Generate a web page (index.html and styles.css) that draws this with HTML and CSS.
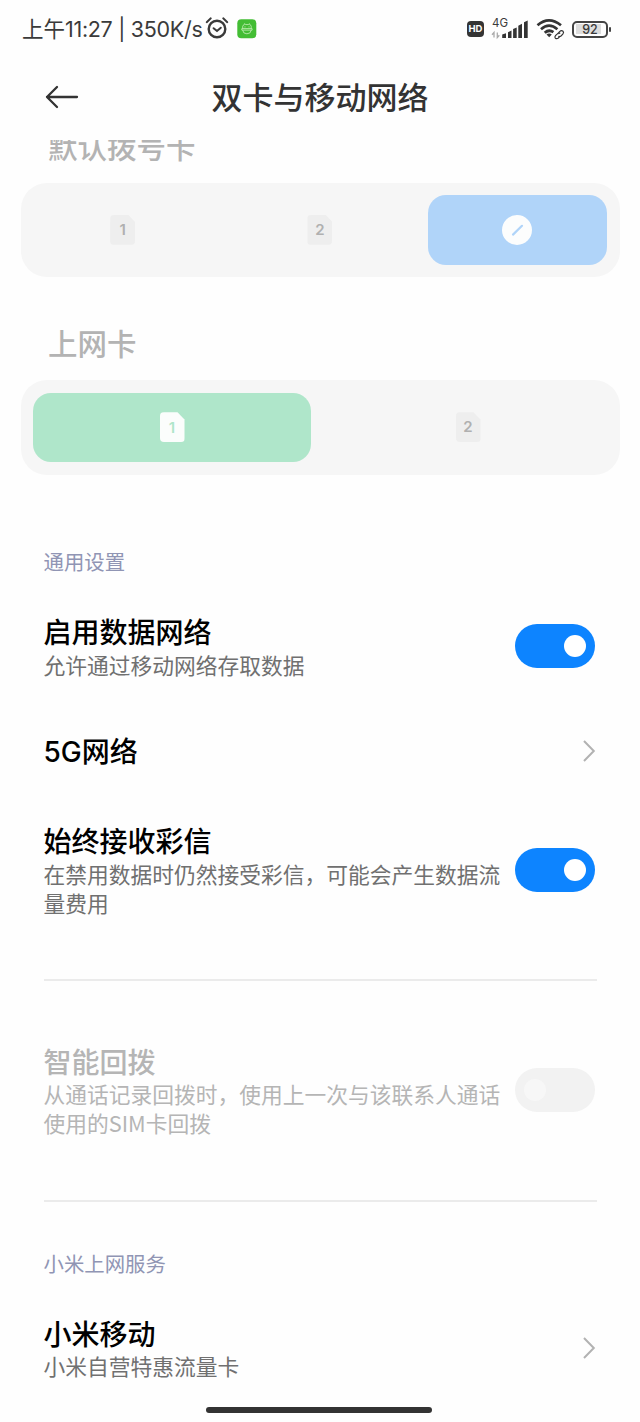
FILE: index.html
```html
<!DOCTYPE html>
<html lang="zh-CN">
<head>
<meta charset="utf-8">
<title>双卡与移动网络</title>
<link rel="stylesheet" href="styles.css">
</head>
<body>
<div class="screen">
  <header class="status">
    <span class="status-time">上午<span class="latin">11:27 | 350K/s</span></span>
    <svg class="alarm" width="24" height="24" viewBox="0 0 24 24" fill="none" stroke="#3a3a3a" stroke-linecap="round"><circle cx="12" cy="13" r="8.3" stroke-width="2.4"/><path d="M1.7 6.2 5.8 2.3M22.3 6.2 18.2 2.3" stroke-width="1.9"/><path d="M8.6 12.2 12 15l3.8-3.3" stroke-width="2"/></svg>
    <svg class="app" width="20" height="20" viewBox="0 0 20 20"><rect x=".3" y=".3" width="19" height="19" rx="4" fill="#43bd34"/><g fill="none" stroke="#c9f0bd" stroke-width=".8"><path d="M5.7 9.5V7.2Q6 6 7.2 5.8L7.5 4.7 8.8 5.6h2.4l1.3-.9.3 1.1Q14 6 14.2 7.2v2.3M4.8 9.6h10.3v1.5H4.8zM5.7 11.2q.3 3.6 4.2 3.6t4.3-3.6M8 7.4v1M12 7.4v1"/></g></svg>
    <span class="spacer"></span>
    <span class="hd">HD</span>
    <span class="signal">
      <span class="signal-type">4G</span>
      <svg width="38" height="20" viewBox="0 0 38 20"><g fill="#343434"><path d="M11.2 14.6 15 13.2V18h-3.8zM17 12.2l3.5-1.7V18H17zM22.1 9l3.6-1.6V18h-3.6zM27.3 5.7l3.7-2V18h-3.7zM33 2.3l3.7-1.8V18H33z"/></g><path d="M3 17.5v-5L1 14.8M6.3 12.5v5l2-2.3" fill="none" stroke="#aaa" stroke-width="1.3"/></svg>
    </span>
    <svg class="wifi" width="30" height="22" viewBox="0 0 30 22" fill="none"><g stroke="#343434" stroke-width="2.7"><path d="M1.5 7.3Q12.8-2.5 25 7.3M5 11.2Q13 4 21.4 11.2M8.7 14.8Q13 11 17.4 14.2"/></g><path d="M10.5 16.4Q13.2 14.7 15.8 16.4L13.2 19.2z" fill="#343434"/><g stroke="#343434" stroke-width="1.2"><path d="m21.6 16 2-2.4q1.8-1.6 3.4-.4 1.2 1.4-.2 3l-1.8 1.8q-1.3.9-2.7.2M24.3 15.4q-1.8-.9-3 .4l-1.8 1.8q-1.2 1.6-.1 2.6 1.4 1 3-.2l1.7-1.8"/></g></svg>
    <span class="battery"><span class="battery-level">92</span></span>
  </header>

  <nav class="titlebar">
    <svg class="back" width="34" height="24" viewBox="0 0 34 24" fill="none" stroke="#333" stroke-width="2.3" stroke-linecap="round" stroke-linejoin="round"><path d="M32 12H2M12 2 2 12l10 10"/></svg>
    <h1 class="title">双卡与移动网络</h1>
  </nav>

  <main class="content">
    <h2 class="card-title card-title-clipped">默认拨号卡</h2>
    <div class="picker">
      <div class="option"><span class="sim">1</span></div>
      <div class="option"><span class="sim">2</span></div>
      <div class="option option-blue"><svg width="30" height="30" viewBox="0 0 30 30"><circle cx="15" cy="15" r="15" fill="#fcfdfd"/><path d="m11 19.6 9-8.8" stroke="#b0d4f9" stroke-width="2.2" stroke-linecap="round"/></svg></div>
    </div>
    <h2 class="card-title">上网卡</h2>
    <div class="picker">
      <div class="option option-green"><span class="sim sim-active">1</span></div>
      <div class="option"><span class="sim">2</span></div>
    </div>

    <section class="group group-general">
      <h3 class="group-label">通用设置</h3>
      <div class="row">
        <div class="row-text"><div class="row-title">启用数据网络</div><div class="row-desc">允许通过移动网络存取数据</div></div>
        <span class="toggle"></span>
      </div>
      <div class="row">
        <div class="row-text"><div class="row-title"><span class="latin">5G</span>网络</div></div>
        <svg class="chevron" width="14" height="24" viewBox="0 0 14 24"><path d="M2 2 11.8 12 2 22"/></svg>
      </div>
      <div class="row">
        <div class="row-text"><div class="row-title">始终接收彩信</div><div class="row-desc">在禁用数据时仍然接受彩信，可能会产生数据流量费用</div></div>
        <span class="toggle"></span>
      </div>
    </section>
    <section class="group group-callback">
      <div class="row row-disabled">
        <div class="row-text"><div class="row-title">智能回拨</div><div class="row-desc">从通话记录回拨时，使用上一次与该联系人通话使用的SIM卡回拨</div></div>
        <span class="toggle toggle-off"></span>
      </div>
    </section>
    <section class="group group-service">
      <h3 class="group-label">小米上网服务</h3>
      <div class="row">
        <div class="row-text"><div class="row-title">小米移动</div><div class="row-desc">小米自营特惠流量卡</div></div>
        <svg class="chevron" width="14" height="24" viewBox="0 0 14 24"><path d="M2 2 11.8 12 2 22"/></svg>
      </div>
    </section>
  </main>
  <div class="home-bar"></div>
</div>
</body>
</html>
```

FILE: styles.css
```css
* { box-sizing: border-box; }
body { margin: 0; background: #fefefe; font-family: "Noto Sans CJK SC", sans-serif; }
h1, h2, h3 { margin: 0; }
svg { display: block; flex: none; }
.latin { font-family: Inter, sans-serif; line-height: 1; }
.screen { position: relative; width: 640px; height: 1422px; overflow: hidden; display: flex; flex-direction: column; }

.status { flex: none; height: 58px; padding: 0 28px 0 22px; display: flex; align-items: center; color: #3a3a3a; }
.status-time { width: 183px; margin-top: -2px; font-size: 21.5px; line-height: 30px; white-space: nowrap; }
.status-time .latin { letter-spacing: -.3px; }
.alarm { margin-bottom: 2px; }
.app { margin-left: 8px; }
.spacer { flex: 1; }
.hd { width: 17px; height: 16px; margin-bottom: 1px; border-radius: 4px; background: #343434; color: #fff; font: 700 9.5px/16px Inter, sans-serif; text-align: center; }
.signal { position: relative; width: 38px; margin-left: 7px; padding-top: 1px; }
.signal-type { position: absolute; left: 1px; top: -2px; font: 11.5px/12px Inter, sans-serif; }
.wifi { margin: 0 0 0 7px; }
.battery { position: relative; width: 36px; height: 17px; margin: 0 4px 0 6px; padding: 1.5px 2px; border: 2px solid #444; border-radius: 5px; }
.battery::after { content: ""; position: absolute; left: 35px; top: 4px; width: 2px; height: 5px; background: #444; border-radius: 1px; }
.battery-level { display: block; width: 28px; height: 10px; background: linear-gradient(90deg, #ddd 90%, transparent 90%); font: 500 12.5px/11px Inter, sans-serif; text-align: center; }

.titlebar { flex: none; height: 82px; padding: 0 45px 5px; display: grid; grid-template-columns: 1fr auto 1fr; align-items: center; }
.title { margin-top: -1px; font-size: 31px; font-weight: 500; line-height: 40px; color: #333; }

.content { flex: 1; overflow: hidden; padding: 0 20.5px; }
.card-title { height: 103px; padding: 44px 0 0 27.5px; font-size: 29.5px; font-weight: 500; line-height: 43px; color: #b3b3b3; }
.card-title-clipped { height: 42.5px; padding-top: 0; line-height: 10px; }
.picker { height: 94.5px; padding: 12.5px; display: flex; gap: 18px; background: #f6f6f6; border-radius: 26px; }
.option { flex: 1; display: flex; align-items: center; justify-content: center; border-radius: 18px; }
.option-blue { background: #b0d4f9; }
.option-green { background: #afe6ca; }
.sim { width: 25px; height: 30px; border-radius: 4px; background: #eee; clip-path: polygon(0 0, 72% 0, 100% 24%, 100% 100%, 0 100%); color: #b0b0b0; font: 600 15px/30px Inter, sans-serif; text-align: center; }
.sim-active { background: #fbfdfc; color: #afe6ca; line-height: 32px; }

.group { margin: 0 23px; }
.group-general { padding-top: 71.5px; }
.group-label { height: 31px; font-size: 20.4px; font-weight: 400; line-height: 31px; color: #9095b4; }
.row { padding: 26.5px 0; display: flex; align-items: center; justify-content: space-between; }
.group-general .group-label { margin-bottom: 9.5px; }
.group-callback { margin-top: 35px; padding: 35.5px 0; border: solid #ebebeb; border-width: 2px 0; }
.group-service { padding-top: 46.5px; }
.group-service .group-label { margin-bottom: 9px; }
.row-text { width: 462px; }
.row-title { font-size: 28px; font-weight: 500; line-height: 37px; color: #000; }
.row-desc { position: relative; top: -.5px; font-size: 21.75px; line-height: 29px; color: #707070; }
.row-disabled .row-title, .row-disabled .row-desc { color: #b5b5b5; }
.toggle { width: 80px; height: 44px; margin-right: 1.5px; padding: 11px 9px; border-radius: 22px; background: #0d84ff; display: flex; justify-content: flex-end; }
.toggle::before { content: ""; width: 22px; height: 22px; border-radius: 50%; background: #fff; }
.toggle-off { justify-content: flex-start; background: #f2f2f2; }
.toggle-off::before { background: #f7f7f7; }
.chevron { margin-right: 1px; }
.chevron path { fill: none; stroke: #b2b2b2; stroke-width: 2; }

.home-bar { position: absolute; left: 206px; top: 1407px; width: 226px; height: 6px; border-radius: 3px; background: #333; }
```
